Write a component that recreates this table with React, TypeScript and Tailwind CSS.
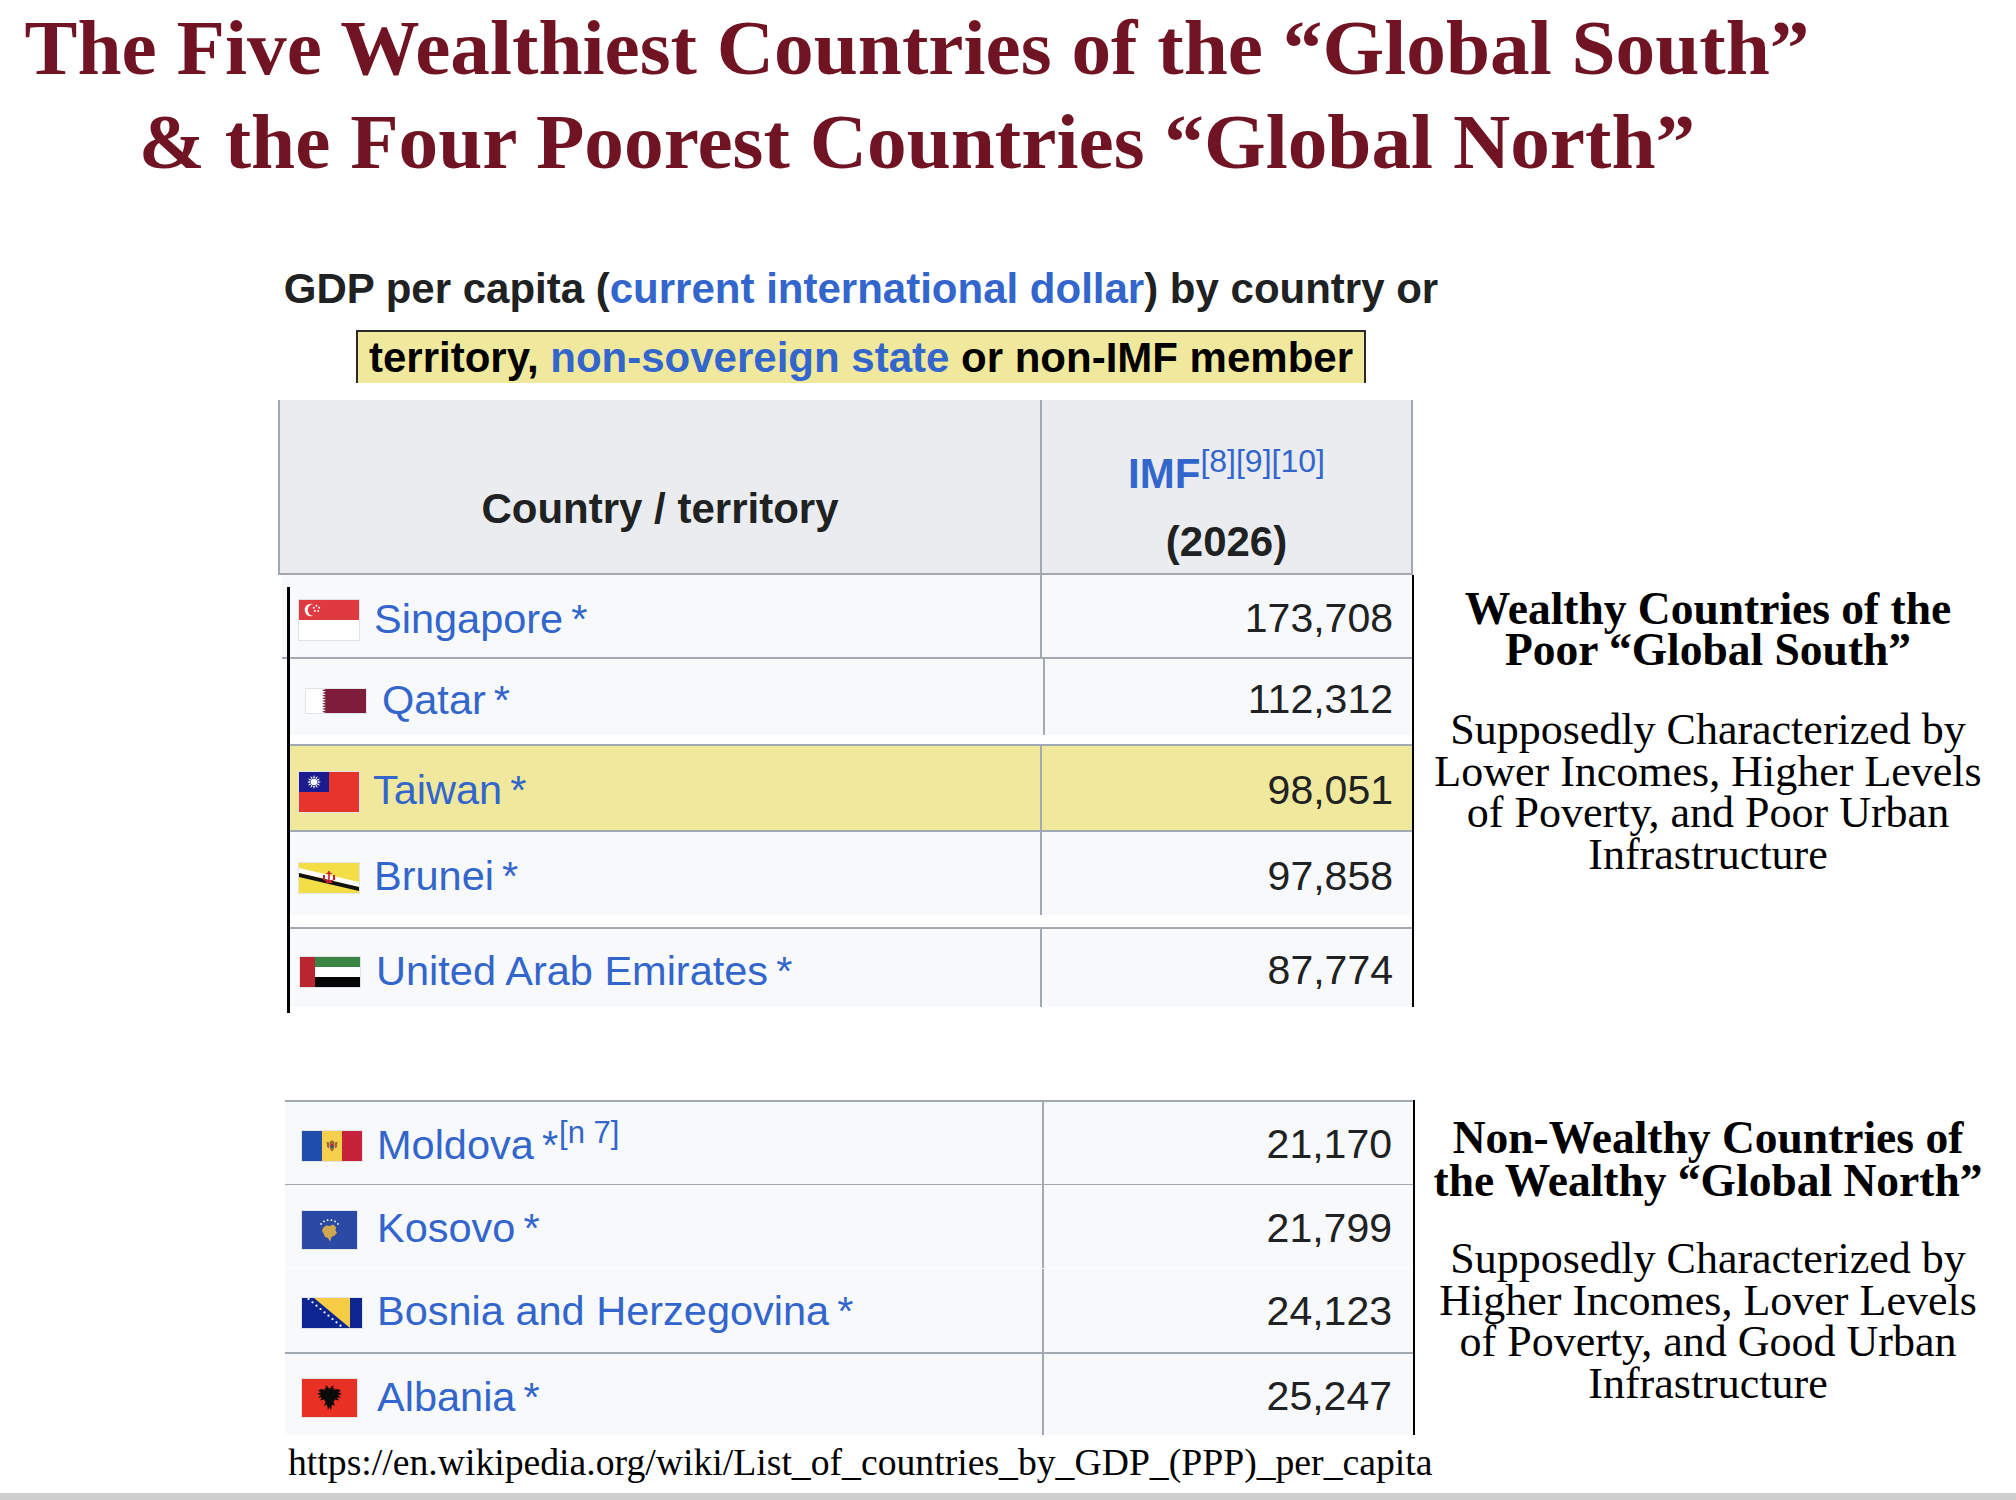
import React from "react";

const SANS = "font-['Liberation_Sans',Arial,sans-serif]";
const SERIF = "font-['Liberation_Serif','Times_New_Roman',serif]";

function FlagBox({ children }: { children: React.ReactNode }) {
  return (
    <span className="inline-flex w-[62px] shrink-0 translate-y-[1px]">
      <span className="flex border border-[#e2e4e8]">{children}</span>
    </span>
  );
}

function Singapore() {
  return (
    <svg width="60" height="40" viewBox="0 0 60 40">
      <rect width="60" height="20" fill="#df3a42" />
      <rect y="20" width="60" height="20" fill="#ffffff" />
      <circle cx="12" cy="10" r="6.3" fill="#ffffff" />
      <circle cx="14.6" cy="10" r="5.9" fill="#df3a42" />
      <g fill="#ffffff">
        <circle cx="17.5" cy="5.8" r="0.95" />
        <circle cx="14.8" cy="7.8" r="0.95" />
        <circle cx="20.2" cy="7.8" r="0.95" />
        <circle cx="15.8" cy="11" r="0.95" />
        <circle cx="19.2" cy="11" r="0.95" />
      </g>
    </svg>
  );
}

function Qatar() {
  const pts: string[] = ["60,0", "20,0"];
  for (let i = 0; i < 9; i++) {
    const h = 24 / 9;
    pts.push(`16,${(i * h + h / 2).toFixed(2)}`);
    pts.push(`20,${((i + 1) * h).toFixed(2)}`);
  }
  pts.push("60,24");
  return (
    <svg width="60" height="24" viewBox="0 0 60 24">
      <rect width="60" height="24" fill="#ffffff" />
      <polygon points={pts.join(" ")} fill="#7e1d39" />
    </svg>
  );
}

function Taiwan() {
  const pts: string[] = [];
  for (let i = 0; i < 24; i++) {
    const r = i % 2 === 0 ? 7 : 4;
    const a = ((i * 15 - 90) * Math.PI) / 180;
    pts.push(`${(15 + r * Math.cos(a)).toFixed(2)},${(10 + r * Math.sin(a)).toFixed(2)}`);
  }
  return (
    <svg width="60" height="40" viewBox="0 0 60 40">
      <rect width="60" height="40" fill="#e8352b" />
      <rect width="30" height="20" fill="#1b1a8e" />
      <polygon points={pts.join(" ")} fill="#ffffff" />
      <circle cx="15" cy="10" r="3.9" fill="#1b1a8e" />
      <circle cx="15" cy="10" r="3.3" fill="#ffffff" />
    </svg>
  );
}

function Brunei() {
  return (
    <svg width="60" height="30" viewBox="0 0 60 30">
      <rect width="60" height="30" fill="#f3df45" />
      <path d="M0 5 L60 19 L60 24 L0 10Z" fill="#ffffff" />
      <path d="M0 10 L60 24 L60 28 L0 14Z" fill="#111111" />
      <g fill="#cc1f2b">
        <path d="M23 15 Q30 23 37 15 Q30 19.5 23 15Z" />
        <rect x="29.2" y="8" width="1.6" height="9" />
        <path d="M26.5 11 Q30 7.5 33.5 11Z" />
        <rect x="24" y="12" width="2" height="5" />
        <rect x="34" y="12" width="2" height="5" />
        <rect x="27" y="18.5" width="6" height="1.5" />
      </g>
    </svg>
  );
}

function UAE() {
  return (
    <svg width="60" height="30" viewBox="0 0 60 30">
      <rect width="15" height="30" fill="#b9262f" />
      <rect x="15" width="45" height="10" fill="#3b8544" />
      <rect x="15" y="10" width="45" height="10" fill="#ffffff" />
      <rect x="15" y="20" width="45" height="10" fill="#050505" />
    </svg>
  );
}

function Moldova() {
  return (
    <svg width="60" height="30" viewBox="0 0 60 30">
      <rect width="20" height="30" fill="#1f4dac" />
      <rect x="20" width="20" height="30" fill="#f6d04d" />
      <rect x="40" width="20" height="30" fill="#c8223a" />
      <g fill="#9c6b35">
        <path d="M27.5 11 L30 9 L32.5 11 L32.5 15.5 L31.5 19 L30 20.5 L28.5 19 L27.5 15.5Z" />
        <path d="M27 11.5 L24.5 10.5 L25 16 L27 17.5Z" />
        <path d="M33 11.5 L35.5 10.5 L35 16 L33 17.5Z" />
      </g>
      <rect x="28.6" y="13" width="2.8" height="1.8" fill="#c8223a" />
      <rect x="28.6" y="14.8" width="2.8" height="1.8" fill="#1f4dac" />
    </svg>
  );
}

function Kosovo() {
  const stars: [number, number][] = [];
  for (let i = 0; i < 6; i++) {
    const a = ((-140 + i * 20) * Math.PI) / 180;
    stars.push([27.5 + 11 * Math.cos(a), 20 + 11 * Math.sin(a)]);
  }
  return (
    <svg width="55" height="38" viewBox="0 0 55 38">
      <rect width="55" height="38" fill="#2a4aa6" />
      <polygon
        points="21,17 24,14.5 28,15 31,13.5 34,16 33.5,19.5 35,22 32,25 29.5,26 28,30.5 26,27 23,26 21.5,22.5 20,20"
        fill="#d0a650"
      />
      <g fill="#ffffff">
        {stars.map(([x, y], i) => (
          <circle key={i} cx={x} cy={y} r="0.9" />
        ))}
      </g>
    </svg>
  );
}

function Bosnia() {
  const stars: [number, number][] = [];
  for (let i = 0; i < 9; i++) stars.push([6.5 + i * 4, 1 + i * 3.33]);
  return (
    <svg width="60" height="30" viewBox="0 0 60 30">
      <rect width="60" height="30" fill="#0d2591" />
      <polygon points="12,0 48,0 48,30" fill="#f8cd46" />
      <g fill="#ffffff">
        {stars.map(([x, y], i) => (
          <circle key={i} cx={x} cy={y} r="1.1" />
        ))}
      </g>
    </svg>
  );
}

function Albania() {
  return (
    <svg width="55" height="38" viewBox="0 0 55 38">
      <rect width="55" height="38" fill="#e83124" />
      <path
        d="M27.5 10 L25 7 L23 6.5 L24.5 9 L22 9.5 L24 11 L19 10 L16 12 L19 13 L15 15 L19 16 L16 18.5 L20 18.5 L18 21.5 L22 20.5 L23.5 23 L22 27 L25 25.5 L26 31 L27.5 28 L29 31 L30 25.5 L33 27 L31.5 23 L33 20.5 L37 21.5 L35 18.5 L39 18.5 L36 16 L40 15 L36 13 L39 12 L36 10 L31 11 L33 9.5 L30.5 9 L32 6.5 L30 7 Z"
        fill="#0a0a0a"
      />
    </svg>
  );
}

function Name({ children, note }: { children: React.ReactNode; note?: string }) {
  return (
    <span className="whitespace-nowrap text-[41.5px] text-[#3366cc]">
      {children}
      <span className="ml-[8px]">*</span>
      {note ? <sup className="ml-[1px] text-[31px]">{note}</sup> : null}
    </span>
  );
}

export default function App() {
  return (
    <div className="relative flex h-[1500px] w-[2016px] flex-col overflow-hidden bg-white">
      {/* Title */}
      <h1
        className={`${SERIF} w-[1834px] whitespace-nowrap text-center text-[79.3px] font-bold leading-[94px] text-[#701424]`}
      >
        The Five Wealthiest Countries of the “Global South”
        <br />& the Four Poorest Countries “Global North”
      </h1>

      {/* Caption */}
      <div
        className={`${SANS} mt-[77px] flex w-[1722px] flex-col items-center text-[42px] font-bold leading-[48px] text-[#202122]`}
      >
        <div className="whitespace-nowrap">
          GDP per capita (<span className="text-[#3366cc]">current international dollar</span>) by country or
        </div>
        <div className="mt-[17px] whitespace-nowrap border-2 border-b-0 border-[#2a2a2a] bg-[#f0e89c] px-[11px] pb-[1px] pt-[2px] text-black">
          territory, <span className="text-[#3366cc]">non-sovereign state</span> or non-IMF member
        </div>
      </div>

      {/* Header */}
      <div
        className={`${SANS} ml-[278px] mt-[17px] flex h-[175px] w-[1135px] shrink-0 border-x-2 border-b-2 border-[#a2a9b1] bg-[#eaecf0] text-[42px] font-bold text-[#202122]`}
      >
        <div className="w-[760px] pt-[85px] text-center leading-[48px]">Country / territory</div>
        <div className="flex flex-1 flex-col items-center border-l-2 border-[#a2a9b1] pt-[40px] leading-[68px]">
          <div className="whitespace-nowrap text-[#3366cc]">
            IMF<sup className="text-[32px] font-normal">[8][9][10]</sup>
          </div>
          <div>(2026)</div>
        </div>
      </div>

      {/* Group 1 */}
      <div className={`${SANS} flex shrink-0 text-[41px]`}>
        <div className="relative ml-[282px] flex w-[1132px] flex-col border-r-2 border-black">
          <div className="flex h-[84px] border-b-2 border-[#a2a9b1] bg-[#f8f9fa]">
            <div className="flex w-[758px] items-center pl-[16px] pt-[6px]">
              <FlagBox>
                <Singapore />
              </FlagBox>
              <span className="ml-[14px]">
                <Name>Singapore</Name>
              </span>
            </div>
            <div className="flex flex-1 items-center justify-end border-l-2 border-[#a2a9b1] pr-[19px] pt-[6px] text-[#202122]">
              173,708
            </div>
          </div>
          <div className="ml-[8px] flex h-[76px] bg-[#f8f9fa]">
            <div className="flex w-[753px] items-center pl-[15px] pt-[6px]">
              <FlagBox>
                <Qatar />
              </FlagBox>
              <span className="ml-[15px]">
                <Name>Qatar</Name>
              </span>
            </div>
            <div className="flex flex-1 items-center justify-end border-l-2 border-[#a2a9b1] pr-[19px] pt-[6px] text-[#202122]">
              112,312
            </div>
          </div>
          <div className="h-[9px]" />
          <div className="ml-[8px] flex h-[88px] border-y-2 border-[#a2a9b1] bg-[#f0e89c]">
            <div className="flex w-[750px] items-center pl-[8px] pt-[5px]">
              <FlagBox>
                <Taiwan />
              </FlagBox>
              <span className="ml-[13px]">
                <Name>Taiwan</Name>
              </span>
            </div>
            <div className="flex flex-1 items-center justify-end border-l-2 border-[#a2a9b1] pr-[19px] pt-[5px] text-[#202122]">
              98,051
            </div>
          </div>
          <div className="ml-[8px] flex h-[83px] bg-[#f8f9fa]">
            <div className="flex w-[750px] items-center pl-[8px] pt-[6px]">
              <FlagBox>
                <Brunei />
              </FlagBox>
              <span className="ml-[14px]">
                <Name>Brunei</Name>
              </span>
            </div>
            <div className="flex flex-1 items-center justify-end border-l-2 border-[#a2a9b1] pr-[19px] pt-[6px] text-[#202122]">
              97,858
            </div>
          </div>
          <div className="h-[12px]" />
          <div className="ml-[8px] flex h-[80px] border-t-2 border-[#a2a9b1] bg-[#f8f9fa]">
            <div className="flex w-[750px] items-center pl-[9px] pt-[6px]">
              <FlagBox>
                <UAE />
              </FlagBox>
              <span className="ml-[15px]">
                <Name>United Arab Emirates</Name>
              </span>
            </div>
            <div className="flex flex-1 items-center justify-end border-l-2 border-[#a2a9b1] pr-[19px] pt-[6px] text-[#202122]">
              87,774
            </div>
          </div>
          <div className="absolute -bottom-[6px] left-[5px] top-[12px] w-[3px] bg-black" />
        </div>
        <div className={`${SERIF} w-[588px] whitespace-nowrap pt-[13px] text-center text-black`}>
          <div className="text-[45.5px] font-bold leading-[41px]">
            Wealthy Countries of the
            <br />
            Poor “Global South”
          </div>
          <div className="mt-[39px] text-[44px] leading-[41.7px]">
            Supposedly Characterized by
            <br />
            Lower Incomes, Higher Levels
            <br />
            of Poverty, and Poor Urban
            <br />
            Infrastructure
          </div>
        </div>
      </div>

      <div className="h-[93px] shrink-0" />

      {/* Group 2 */}
      <div className={`${SANS} flex shrink-0 text-[41px]`}>
        <div className="ml-[285px] flex w-[1130px] flex-col border-r-2 border-black">
          <div className="flex h-[85px] border-b border-t-2 border-[#a2a9b1] bg-[#f8f9fa]">
            <div className="flex w-[757px] items-center pl-[16px] pt-[4px]">
              <FlagBox>
                <Moldova />
              </FlagBox>
              <span className="ml-[14px]">
                <Name note="[n 7]">Moldova</Name>
              </span>
            </div>
            <div className="flex flex-1 items-center justify-end border-l-2 border-[#a2a9b1] pr-[21px] pt-[4px] text-[#202122]">
              21,170
            </div>
          </div>
          <div className="flex h-[84px] border-b border-white bg-[#f8f9fa]">
            <div className="flex w-[757px] items-center pl-[16px] pt-[4px]">
              <FlagBox>
                <Kosovo />
              </FlagBox>
              <span className="ml-[14px]">
                <Name>Kosovo</Name>
              </span>
            </div>
            <div className="flex flex-1 items-center justify-end border-l-2 border-[#a2a9b1] pr-[21px] pt-[4px] text-[#202122]">
              21,799
            </div>
          </div>
          <div className="flex h-[85px] border-b-2 border-[#a2a9b1] bg-[#f8f9fa]">
            <div className="flex w-[757px] items-center pl-[16px] pt-[2px]">
              <FlagBox>
                <Bosnia />
              </FlagBox>
              <span className="ml-[14px]">
                <Name>Bosnia and Herzegovina</Name>
              </span>
            </div>
            <div className="flex flex-1 items-center justify-end border-l-2 border-[#a2a9b1] pr-[21px] pt-[2px] text-[#202122]">
              24,123
            </div>
          </div>
          <div className="flex h-[81px] bg-[#f8f9fa]">
            <div className="flex w-[757px] items-center pl-[16px] pt-[5px]">
              <FlagBox>
                <Albania />
              </FlagBox>
              <span className="ml-[14px]">
                <Name>Albania</Name>
              </span>
            </div>
            <div className="flex flex-1 items-center justify-end border-l-2 border-[#a2a9b1] pr-[21px] pt-[5px] text-[#202122]">
              25,247
            </div>
          </div>
        </div>
        <div className={`${SERIF} w-[586px] whitespace-nowrap pt-[16px] text-center text-black`}>
          <div className="text-[45.5px] font-bold leading-[43px]">
            Non-Wealthy Countries of
            <br />
            the Wealthy “Global North”
          </div>
          <div className="mt-[36px] text-[44px] leading-[41.7px]">
            Supposedly Characterized by
            <br />
            Higher Incomes, Lover Levels
            <br />
            of Poverty, and Good Urban
            <br />
            Infrastructure
          </div>
        </div>
      </div>

      {/* Source */}
      <div className={`${SERIF} ml-[288px] mt-[7px] whitespace-nowrap text-[37.7px] leading-[40px] text-black`}>
        https://en.wikipedia.org/wiki/List_of_countries_by_GDP_(PPP)_per_capita
      </div>

      <div className="mt-auto h-[7px] w-full shrink-0 bg-[#cfcfcf]" />
    </div>
  );
}
